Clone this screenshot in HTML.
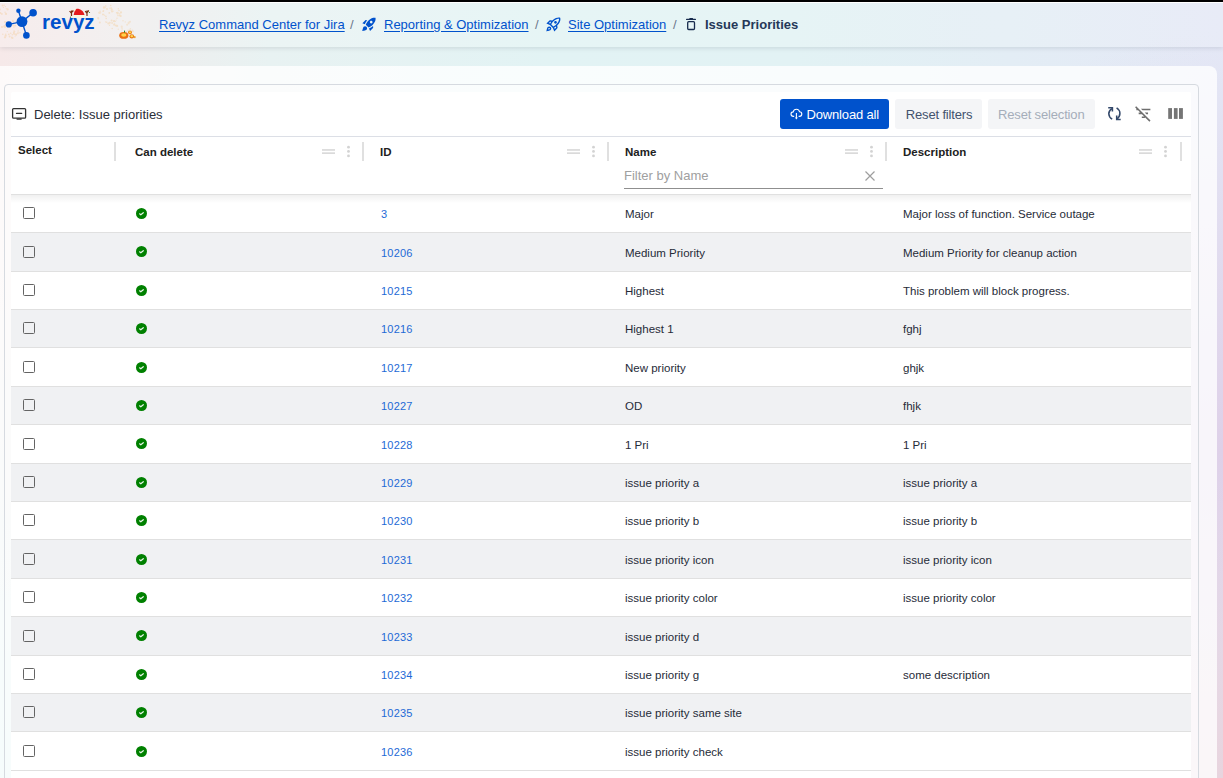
<!DOCTYPE html><html><head><meta charset="utf-8"><title>Issue Priorities</title><style>*{box-sizing:border-box;margin:0;padding:0}
html,body{width:1223px;height:778px;overflow:hidden}
body{position:relative;font-family:"Liberation Sans",sans-serif;color:#172b4d;background:radial-gradient(ellipse 420px 300px at 100% 100%, rgba(232,212,222,1) 0%, rgba(232,212,222,0) 100%),radial-gradient(ellipse 380px 420px at 100% 58%, rgba(222,208,232,1) 0%, rgba(222,208,232,0) 100%),radial-gradient(ellipse 500px 520px at 0% 100%, rgba(212,242,242,1) 0%, rgba(212,242,242,0) 100%),linear-gradient(90deg,#f6e9e9 0%,#f0eded 10%,#e8f2f2 22%,#e2f3f4 45%,#e2f2f4 65%,#e4e8f6 100%);}
.abs{position:absolute}
.topbar{position:absolute;left:0;top:0;width:1223px;height:2px;background:#000}
.hdr{position:absolute;left:0;top:2px;width:1223px;height:45px;border-top:1px solid #fff;background:rgba(255,255,255,.16);box-shadow:0 1px 5px rgba(0,20,40,.12)}
.crumb{position:absolute;top:17px;font-size:13px;line-height:15px;color:#0052cc;text-decoration:underline;text-underline-offset:2px;white-space:nowrap}
.sep{position:absolute;top:17px;font-size:13px;line-height:15px;color:#6b778c}
.cur{position:absolute;top:17px;font-size:13px;line-height:15px;font-weight:bold;color:#253858;white-space:nowrap}
.outer{position:absolute;left:-10px;top:66px;width:1227px;height:800px;border-radius:8px;background:rgba(255,255,255,.78)}
.inner{position:absolute;left:4px;top:84px;width:1195px;height:800px;border:1px solid #d6dae0;border-radius:4px;background:rgba(255,255,255,.2)}
.white{position:absolute;left:11px;top:92px;width:1180px;height:800px;background:#fff;border-radius:2px}
.title{position:absolute;left:34px;top:107px;font-size:13px;line-height:15px;color:#2a2e38;white-space:nowrap}
.btn{position:absolute;top:99px;height:30px;border-radius:3px;font-size:13px;letter-spacing:-0.16px;line-height:30px;white-space:nowrap}
.tline{position:absolute;left:11px;top:136px;width:1180px;height:1px;background:#dcdfe6}
.hline{position:absolute;left:11px;top:194px;width:1180px;height:1px;background:#e0e0e0}
.th{position:absolute;font-size:11.5px;line-height:13px;font-weight:bold;color:#212121;white-space:nowrap}
.csep{position:absolute;top:142px;width:2px;height:19px;background:#e0e0e0}
.drag{position:absolute;top:149px;width:13px;height:4.9px;border-top:1.7px solid #dadada;border-bottom:1.7px solid #dadada}
.dots{position:absolute;top:145.3px;width:3px;height:12px}
.rows{position:absolute;left:0;top:0;width:1223px}
.row{position:absolute;left:11px;width:1180px;height:38.4px;border-bottom:1px solid #e0e0e0;background:#fff;box-sizing:border-box}
.row.alt{background:#f0f1f3}
.rows span,.rows svg{position:absolute;white-space:nowrap}
.cb{left:23px;width:12px;height:12px;border:1.5px solid #646464;border-radius:1.5px}
.ok{left:136px;width:11px;height:11px}
.cid{left:381px;font-size:11px;letter-spacing:0.2px;line-height:13px;color:#1e6ad6}
.cname{left:625px;font-size:11.5px;line-height:13px;color:#262b38}
.cdesc{left:903px;font-size:11.5px;line-height:13px;color:#262b38}
.shadow{position:absolute;left:11px;top:195px;width:1180px;height:8px;background:linear-gradient(rgba(0,0,0,.06),rgba(0,0,0,0));z-index:5}

.bt{position:absolute;top:100px;font-size:13px;letter-spacing:-0.16px;line-height:30px;white-space:nowrap;}
</style></head><body><div class="topbar"></div>
<div class="hdr">
 <svg class="abs" style="left:0;top:-3px" width="150" height="47" viewBox="0 0 150 47"><g fill="#f3c078" opacity="0.3"><circle cx="8.8" cy="34.3" r="0.9"/><circle cx="17.9" cy="33.4" r="0.8"/><circle cx="18.0" cy="32.7" r="0.6"/><circle cx="7.3" cy="31.6" r="0.6"/><circle cx="2.8" cy="34.2" r="0.7"/><circle cx="12.4" cy="38.0" r="1.1"/><circle cx="5.0" cy="26.9" r="1.1"/><circle cx="19.9" cy="32.7" r="0.7"/><circle cx="13.8" cy="33.6" r="0.8"/><circle cx="13.1" cy="25.3" r="0.9"/><circle cx="6.8" cy="24.9" r="0.9"/><circle cx="14.6" cy="31.5" r="0.7"/><circle cx="8.1" cy="23.7" r="0.8"/><circle cx="4.9" cy="26.4" r="0.7"/><circle cx="13.4" cy="21.8" r="0.7"/><circle cx="4.2" cy="26.6" r="1.0"/><circle cx="10.2" cy="24.1" r="1.1"/><circle cx="16.1" cy="34.7" r="1.0"/><circle cx="15.2" cy="36.0" r="0.6"/><circle cx="6.6" cy="22.3" r="0.9"/><circle cx="15.4" cy="25.6" r="0.9"/><circle cx="4.5" cy="25.6" r="0.8"/><circle cx="16.2" cy="21.8" r="0.8"/><circle cx="9.0" cy="26.6" r="1.0"/><circle cx="5.0" cy="22.0" r="1.0"/><circle cx="9.6" cy="36.5" r="0.9"/><circle cx="18.1" cy="31.0" r="0.7"/><circle cx="13.9" cy="32.6" r="1.0"/><circle cx="14.9" cy="34.1" r="0.8"/><circle cx="13.9" cy="27.0" r="0.8"/><circle cx="2.0" cy="27.1" r="1.0"/><circle cx="14.9" cy="25.5" r="0.8"/><circle cx="5.0" cy="37.3" r="1.1"/><circle cx="14.0" cy="34.1" r="0.7"/><circle cx="11.8" cy="37.3" r="0.9"/><circle cx="10.7" cy="33.2" r="0.8"/><circle cx="5.7" cy="35.7" r="1.1"/><circle cx="8.3" cy="23.0" r="0.9"/><circle cx="9.3" cy="26.6" r="1.0"/><circle cx="12.8" cy="20.7" r="1.0"/><circle cx="5.7" cy="34.2" r="0.7"/><circle cx="8.4" cy="27.0" r="0.6"/><circle cx="12.3" cy="34.8" r="0.8"/><circle cx="14.0" cy="31.0" r="0.7"/><circle cx="16.3" cy="33.9" r="0.6"/></g><g fill="#f3c078" opacity="0.3"><circle cx="5.4" cy="6.6" r="0.7"/><circle cx="1.9" cy="13.9" r="0.8"/><circle cx="6.0" cy="13.9" r="1.1"/><circle cx="-2.3" cy="10.9" r="0.6"/><circle cx="5.1" cy="12.3" r="0.7"/><circle cx="3.4" cy="7.4" r="0.6"/><circle cx="6.3" cy="8.6" r="0.7"/><circle cx="-0.0" cy="9.4" r="0.9"/><circle cx="7.6" cy="9.2" r="0.9"/><circle cx="1.7" cy="13.9" r="0.7"/><circle cx="2.6" cy="5.5" r="1.0"/><circle cx="0.4" cy="12.9" r="1.0"/><circle cx="7.6" cy="9.5" r="1.0"/><circle cx="4.2" cy="5.2" r="0.7"/><circle cx="-1.9" cy="9.6" r="0.6"/></g><g fill="#f3c078" opacity="0.3"><circle cx="117.0" cy="18.2" r="0.7"/><circle cx="105.8" cy="6.0" r="0.8"/><circle cx="121.0" cy="12.4" r="1.1"/><circle cx="105.7" cy="21.9" r="0.7"/><circle cx="112.1" cy="23.0" r="0.9"/><circle cx="119.0" cy="10.5" r="0.8"/><circle cx="103.8" cy="8.1" r="0.6"/><circle cx="103.9" cy="7.3" r="1.0"/><circle cx="110.0" cy="8.3" r="0.7"/><circle cx="111.8" cy="9.6" r="1.0"/><circle cx="118.0" cy="15.6" r="0.8"/><circle cx="119.8" cy="13.6" r="0.7"/><circle cx="114.1" cy="21.2" r="1.1"/><circle cx="112.0" cy="11.6" r="1.0"/><circle cx="119.9" cy="15.8" r="0.8"/><circle cx="104.7" cy="15.3" r="0.6"/><circle cx="119.8" cy="15.2" r="0.9"/><circle cx="117.7" cy="13.6" r="1.0"/><circle cx="113.0" cy="11.3" r="0.7"/><circle cx="108.2" cy="23.5" r="0.9"/><circle cx="109.5" cy="25.3" r="0.7"/><circle cx="116.6" cy="12.8" r="0.8"/><circle cx="100.1" cy="11.3" r="0.8"/><circle cx="117.7" cy="12.6" r="0.9"/><circle cx="105.9" cy="16.4" r="0.8"/><circle cx="111.6" cy="20.5" r="1.0"/><circle cx="114.1" cy="24.7" r="1.0"/><circle cx="102.9" cy="14.4" r="0.9"/><circle cx="99.9" cy="13.3" r="0.7"/><circle cx="103.7" cy="14.5" r="0.7"/><circle cx="111.2" cy="8.1" r="0.9"/><circle cx="110.7" cy="5.5" r="0.8"/><circle cx="103.2" cy="11.2" r="0.9"/><circle cx="107.0" cy="9.0" r="0.9"/><circle cx="98.4" cy="18.6" r="0.9"/><circle cx="118.3" cy="8.8" r="0.7"/><circle cx="99.1" cy="12.7" r="1.0"/><circle cx="113.6" cy="21.2" r="0.8"/><circle cx="116.1" cy="20.0" r="0.6"/><circle cx="104.8" cy="7.6" r="1.0"/><circle cx="115.8" cy="25.5" r="0.9"/><circle cx="117.1" cy="25.9" r="1.1"/><circle cx="112.2" cy="28.5" r="0.8"/><circle cx="98.1" cy="18.0" r="1.0"/><circle cx="114.4" cy="24.1" r="0.9"/><circle cx="106.7" cy="22.3" r="0.8"/><circle cx="109.3" cy="12.9" r="0.9"/><circle cx="106.2" cy="18.5" r="0.8"/><circle cx="103.6" cy="10.7" r="0.6"/><circle cx="120.7" cy="16.0" r="1.1"/><circle cx="115.5" cy="21.3" r="0.6"/><circle cx="111.3" cy="10.1" r="0.7"/><circle cx="99.8" cy="22.4" r="1.0"/><circle cx="109.7" cy="22.8" r="1.1"/><circle cx="100.7" cy="12.6" r="0.6"/></g><g fill="#f3c078" opacity="0.25"><circle cx="132.3" cy="30.4" r="0.8"/><circle cx="133.0" cy="31.4" r="0.9"/><circle cx="127.1" cy="24.8" r="1.0"/><circle cx="132.8" cy="31.0" r="0.8"/><circle cx="122.7" cy="33.2" r="1.1"/><circle cx="125.6" cy="31.7" r="0.9"/><circle cx="126.3" cy="31.6" r="0.7"/><circle cx="130.0" cy="29.3" r="0.8"/><circle cx="123.6" cy="34.7" r="0.7"/><circle cx="121.9" cy="28.0" r="0.8"/><circle cx="130.5" cy="28.5" r="0.6"/><circle cx="125.3" cy="21.9" r="0.7"/><circle cx="118.3" cy="29.2" r="0.7"/><circle cx="128.3" cy="22.9" r="0.8"/><circle cx="128.7" cy="23.4" r="0.9"/><circle cx="123.0" cy="20.7" r="0.8"/><circle cx="129.4" cy="22.0" r="0.9"/><circle cx="121.8" cy="30.9" r="0.6"/><circle cx="128.2" cy="30.4" r="1.0"/><circle cx="125.9" cy="32.0" r="0.6"/><circle cx="130.1" cy="21.7" r="0.9"/><circle cx="125.1" cy="32.4" r="0.7"/><circle cx="122.2" cy="29.0" r="0.8"/><circle cx="125.3" cy="35.8" r="1.1"/><circle cx="121.7" cy="26.7" r="1.1"/></g><g stroke="#0052cc" stroke-width="1.4" fill="none"><line x1="22" y1="21.6" x2="18.4" y2="10.8"/><line x1="22" y1="21.6" x2="33.1" y2="12.8"/><line x1="22" y1="21.6" x2="8.8" y2="24.4"/><line x1="22" y1="21.6" x2="26.4" y2="35.4"/></g><g fill="#0052cc"><circle cx="22" cy="21.6" r="5.4"/><circle cx="18.4" cy="10.8" r="2.2"/><circle cx="33.1" cy="12.8" r="3.8"/><circle cx="8.8" cy="24.4" r="3.1"/><circle cx="26.4" cy="35.4" r="3.3"/></g><text x="42" y="28.7" font-family="Liberation Sans" font-weight="bold" font-size="20.6" fill="#0052cc">revyz</text><path d="M73.6 15.8C74 12.5 74.8 9.6 76.3 8.9 79.8 8.4 83.6 10.8 84.6 15.2Z" fill="#e51a1c"/><circle cx="74.6" cy="10" r=".9" fill="#fff7d0"/><rect x="72.6" y="15" width="12.6" height="2.4" rx="1.2" fill="#fbf6dc"/><g stroke="#7a2e0e" stroke-width="1.2" fill="none"><path d="M71.5 16V10.5M71.5 13.5L69.6 11M71.5 12.5L73.4 10.5"/><path d="M87 16V10.5M87 13.5L85.2 11M87 12.5L88.8 10.5"/></g><circle cx="70.5" cy="17.2" r=".6" fill="#2a8a2a"/><circle cx="89.5" cy="12.5" r=".6" fill="#2a8a2a"/><ellipse cx="123.8" cy="35.4" rx="4.6" ry="3.4" fill="#ea6f12"/><ellipse cx="123.8" cy="35" rx="2.6" ry="1.8" fill="#ffd34a"/><rect x="124" y="30.6" width="1" height="2" fill="#2d8a2d"/><ellipse cx="130" cy="32.4" rx="2" ry="1.8" fill="#ee8318"/><ellipse cx="130" cy="32.2" rx="1.1" ry="1" fill="#ffd84f"/><ellipse cx="131.8" cy="36.4" rx="2.4" ry="2.1" fill="#ea7a16"/><ellipse cx="131.8" cy="36.2" rx="1.3" ry="1.1" fill="#ffd84f"/><ellipse cx="134.8" cy="37.2" rx=".9" ry="1.1" fill="#e9a030"/></svg>
</div>
<a class="crumb" style="left:159px">Revyz Command Center for Jira</a>
<span class="sep" style="left:350px">/</span>
<svg class="abs" style="left:360.7px;top:16px" width="16.32" height="16.32" viewBox="0 0 24 24"><path fill="#0052cc" d="M9.19,6.35c-2.04,2.29-3.44,5.58-3.57,5.89L2,10.69l4.05-4.05c0.47-0.47,1.15-0.68,1.81-0.55L9.19,6.35L9.19,6.35z M11.17,17c0,0,3.74-1.55,5.890-3.7c5.4-5.4,4.5-9.62,4.21-10.57c-0.95-0.3-5.170-1.19-10.57,4.21C8.55,9.09,7,12.83,7,12.83L11.17,17z M17.65,14.81c-2.29,2.04-5.58,3.44-5.89,3.57L13.31,22l4.05-4.05c0.47-0.47,0.68-1.15,0.55-1.81L17.65,14.81L17.65,14.81z M9,18c0,0.83-0.34,1.58-0.88,2.12C6.94,21.3,2,22,2,22s0.7-4.94,1.880-6.12C4.42,15.34,5.17,15,6,15C7.66,15,9,16.34,9,18z M13,9c0-1.1,0.9-2,2-2s2,0.9,2,2s-0.9,2-2,2S13,10.1,13,9z"/></svg>
<a class="crumb" style="left:384px">Reporting &amp; Optimization</a>
<span class="sep" style="left:535px">/</span>
<svg class="abs" style="left:544.6px;top:15.6px" width="16.8" height="16.8" viewBox="0 0 24 24"><path fill="#0052cc" d="M6,15c-0.83,0-1.58,0.34-2.12,0.88C2.7,17.06,2,22,2,22s4.94-0.7,6.12-1.88C8.66,19.58,9,18.83,9,18C9,16.34,7.66,15,6,15z M6.71,18.71c-0.28,0.28-2.170,0.76-2.17,0.76s0.47-1.88,0.76-2.17C5.47,17.11,5.72,17,6,17c0.55,0,1,0.45,1,1C7,18.28,6.89,18.53,6.71,18.71z M17.42,13.65L17.42,13.65c6.36-6.36,4.24-11.31,4.24-11.31s-4.95-2.12-11.31,4.24l-2.49-0.5C7.21,5.950,6.53,6.16,6.05,6.63L2,10.69l5,2.14L11.17,17l2.14,5l4.05-4.05c0.47-0.47,0.68-1.15,0.55-1.81L17.42,13.65z M7.41,10.83L5.5,10.01l1.97-1.97l1.44,0.29C8.34,9.16,7.83,10.03,7.41,10.83z M13.99,18.5l-0.82-1.91c0.8-0.42,1.67-0.93,2.49-1.5l0.29,1.44L13.99,18.5z M16,12.24c-1.32,1.32-3.38,2.4-4.04,2.73l-2.93-2.93c0.32-0.65,1.4-2.71,2.73-4.04c4.68-4.68,8.23-3.99,8.23-3.99S20.68,7.56,16,12.24z M15,11c1.1,0,2-0.9,2-2s-0.9-2-2-2s-2,0.9-2,2S13.9,11,15,11z"/></svg>
<a class="crumb" style="left:568px">Site Optimization</a>
<span class="sep" style="left:673px">/</span>
<svg class="abs" style="left:685px;top:17px" width="12" height="14" viewBox="0 0 12 14"><rect x="1" y="1.8" width="10" height="1.2" rx=".6" fill="#172b4d"/><rect x="4.3" y="1" width="3.7" height="1.4" rx=".5" fill="#172b4d"/><rect x="2.7" y="4.7" width="6.8" height="7.8" rx="1" fill="none" stroke="#172b4d" stroke-width="1.3"/></svg>
<span class="cur" style="left:705px">Issue Priorities</span>

<div class="outer"></div>
<div class="inner"></div>
<div class="white">
</div>
<div style="position:absolute;left:0;top:0;width:1223px;height:778px">
<svg class="abs" style="left:11px;top:107px" width="16" height="14" viewBox="0 0 16 14"><rect x="1.6" y="1.6" width="13" height="9.6" rx="1" fill="none" stroke="#333" stroke-width="1.3"/><line x1="5.5" y1="6.4" x2="10.7" y2="6.4" stroke="#333" stroke-width="1.2" stroke-linecap="round"/><rect x="5.4" y="11.4" width="5.4" height="1.3" rx=".6" fill="#333"/></svg>
<span class="title">Delete: Issue priorities</span>
<div class="btn" style="left:780px;width:109px;background:#0052cc"></div><span class="bt" style="left:806.5px;color:#fff">Download all</span>
<svg class="abs" style="left:786px;top:104px" width="22" height="20" viewBox="0 0 22 20"><path d="M8.2 12.4H7.4C5.9 12.4 5 11.3 5 10.1 5 8.9 5.9 7.9 7.2 7.9 7.6 6.2 8.9 5.3 10.4 5.3 12 5.3 13.2 6.3 13.6 7.8 14.9 7.9 15.8 8.9 15.8 10.1 15.8 11.4 14.9 12.4 13.4 12.4H12.6" fill="none" stroke="#fff" stroke-width="1.1"/><path d="M10.4 9V14" stroke="#fff" stroke-width="1.1"/><path d="M8.9 13.4H11.9L10.4 15.4Z" fill="#fff"/></svg>
<div class="btn" style="left:895px;width:87px;background:#f4f5f7"></div><span class="bt" style="left:905.8px;color:#42526e">Reset filters</span>
<div class="btn" style="left:988px;width:107px;background:#f4f5f7"></div><span class="bt" style="left:998px;color:#a5adba">Reset selection</span>
<svg class="abs" style="left:1104px;top:104px" width="20" height="20" viewBox="0 0 20 20"><g fill="none" stroke="#33486a" stroke-width="1.55"><path d="M7.9 4.6C5.7 6 4.7 7.9 4.8 9.8 4.9 12 6.1 14 8.2 15.2"/><path d="M4.2 3.7H8.4V7.5"/><path d="M12.6 3.9C14.8 5.3 15.9 7.3 15.9 9.3 15.9 11.5 14.9 13.6 13 15"/><path d="M12.7 11.6V15.4H16.7"/></g></svg>
<svg class="abs" style="left:1134.3px;top:104.3px" width="18.72" height="18.72" viewBox="0 0 24 24"><path fill="#6e6e6e" d="M10.83 8H21V6H8.83l2 2zm5 5H18v-2h-4.17l2 2zM14 16.83V18h-4v-2h3.17l-3-3H6v-2h2.17l-3-3H3V6h.17L1.39 4.22 2.8 2.81l18.38 18.38-1.41 1.41L14 16.83z"/></svg>
<svg class="abs" style="left:1164px;top:104px" width="20" height="20" viewBox="0 0 20 20"><g fill="#757575"><rect x="4.2" y="4.1" width="3.8" height="10.8"/><rect x="9.9" y="4.1" width="3.7" height="10.8"/><rect x="15" y="4.1" width="3.9" height="10.8"/></g></svg>
<div class="tline"></div>
<span class="th" style="left:18px;top:144px">Select</span>
<div class="csep" style="left:114px"></div>
<span class="th" style="left:135px;top:146px">Can delete</span>
<svg class="abs" style="left:322px;top:145px" width="13" height="12" viewBox="0 0 13 12"><rect x="0" y="4.1" width="13" height="1.7" fill="#dadada"/><rect x="0" y="7.3" width="13" height="1.7" fill="#dadada"/></svg>
<svg class="abs" style="left:347px;top:145px" width="3" height="13" viewBox="0 0 3 13"><circle cx="1.5" cy="2.2" r="1.4" fill="#d3d3d3"/><circle cx="1.5" cy="6.4" r="1.4" fill="#d3d3d3"/><circle cx="1.5" cy="10.9" r="1.4" fill="#d3d3d3"/></svg>
<div class="csep" style="left:362px"></div>
<span class="th" style="left:380px;top:146px">ID</span>
<svg class="abs" style="left:567px;top:145px" width="13" height="12" viewBox="0 0 13 12"><rect x="0" y="4.1" width="13" height="1.7" fill="#dadada"/><rect x="0" y="7.3" width="13" height="1.7" fill="#dadada"/></svg>
<svg class="abs" style="left:592px;top:145px" width="3" height="13" viewBox="0 0 3 13"><circle cx="1.5" cy="2.2" r="1.4" fill="#d3d3d3"/><circle cx="1.5" cy="6.4" r="1.4" fill="#d3d3d3"/><circle cx="1.5" cy="10.9" r="1.4" fill="#d3d3d3"/></svg>
<div class="csep" style="left:607px"></div>
<span class="th" style="left:625px;top:146px">Name</span>
<span class="abs ph" style="left:624px;top:168px;font-size:13px;line-height:15px;color:#a0a0a0">Filter by Name</span>
<svg class="abs" style="left:864px;top:170px" width="12" height="12" viewBox="0 0 12 12"><path d="M1.5 1.5l9 9M10.5 1.5l-9 9" stroke="#9e9e9e" stroke-width="1.2"/></svg>
<div class="abs" style="left:624px;top:188px;width:259px;height:1px;background:#8f8f8f"></div>
<svg class="abs" style="left:845px;top:145px" width="13" height="12" viewBox="0 0 13 12"><rect x="0" y="4.1" width="13" height="1.7" fill="#dadada"/><rect x="0" y="7.3" width="13" height="1.7" fill="#dadada"/></svg>
<svg class="abs" style="left:870px;top:145px" width="3" height="13" viewBox="0 0 3 13"><circle cx="1.5" cy="2.2" r="1.4" fill="#d3d3d3"/><circle cx="1.5" cy="6.4" r="1.4" fill="#d3d3d3"/><circle cx="1.5" cy="10.9" r="1.4" fill="#d3d3d3"/></svg>
<div class="csep" style="left:885px"></div>
<span class="th" style="left:903px;top:146px">Description</span>
<svg class="abs" style="left:1139px;top:145px" width="13" height="12" viewBox="0 0 13 12"><rect x="0" y="4.1" width="13" height="1.7" fill="#dadada"/><rect x="0" y="7.3" width="13" height="1.7" fill="#dadada"/></svg>
<svg class="abs" style="left:1164px;top:145px" width="3" height="13" viewBox="0 0 3 13"><circle cx="1.5" cy="2.2" r="1.4" fill="#d3d3d3"/><circle cx="1.5" cy="6.4" r="1.4" fill="#d3d3d3"/><circle cx="1.5" cy="10.9" r="1.4" fill="#d3d3d3"/></svg>
<div class="csep" style="left:1180px"></div>
<div class="hline"></div>
<div class="shadow"></div>
<div class="rows"><div class="row" style="top:194.85px"></div><div class="row alt" style="top:233.25px"></div><div class="row" style="top:271.65px"></div><div class="row alt" style="top:310.05px"></div><div class="row" style="top:348.45px"></div><div class="row alt" style="top:386.85px"></div><div class="row" style="top:425.25px"></div><div class="row alt" style="top:463.65px"></div><div class="row" style="top:502.05px"></div><div class="row alt" style="top:540.45px"></div><div class="row" style="top:578.85px"></div><div class="row alt" style="top:617.25px"></div><div class="row" style="top:655.65px"></div><div class="row alt" style="top:694.05px"></div><div class="row" style="top:732.45px"></div><span class="cb" style="top:207.15px"></span><svg class="ok" style="top:208.05px" width="11" height="11" viewBox="0 0 11 11"><circle cx="5.5" cy="5.5" r="5.5" fill="#008000"/><path d="M3.6 5.8 L4.8 6.8 L7.3 4.7" stroke="#eaf5ea" stroke-width="1.15" fill="none" stroke-linecap="round" stroke-linejoin="round"/></svg><span class="cid" style="top:208.10px">3</span><span class="cname" style="top:208.10px">Major</span><span class="cdesc" style="top:208.10px">Major loss of function. Service outage</span><span class="cb" style="top:245.55px"></span><svg class="ok" style="top:246.45px" width="11" height="11" viewBox="0 0 11 11"><circle cx="5.5" cy="5.5" r="5.5" fill="#008000"/><path d="M3.6 5.8 L4.8 6.8 L7.3 4.7" stroke="#eaf5ea" stroke-width="1.15" fill="none" stroke-linecap="round" stroke-linejoin="round"/></svg><span class="cid" style="top:246.50px">10206</span><span class="cname" style="top:246.50px">Medium Priority</span><span class="cdesc" style="top:246.50px">Medium Priority for cleanup action</span><span class="cb" style="top:283.95px"></span><svg class="ok" style="top:284.85px" width="11" height="11" viewBox="0 0 11 11"><circle cx="5.5" cy="5.5" r="5.5" fill="#008000"/><path d="M3.6 5.8 L4.8 6.8 L7.3 4.7" stroke="#eaf5ea" stroke-width="1.15" fill="none" stroke-linecap="round" stroke-linejoin="round"/></svg><span class="cid" style="top:284.90px">10215</span><span class="cname" style="top:284.90px">Highest</span><span class="cdesc" style="top:284.90px">This problem will block progress.</span><span class="cb" style="top:322.35px"></span><svg class="ok" style="top:323.25px" width="11" height="11" viewBox="0 0 11 11"><circle cx="5.5" cy="5.5" r="5.5" fill="#008000"/><path d="M3.6 5.8 L4.8 6.8 L7.3 4.7" stroke="#eaf5ea" stroke-width="1.15" fill="none" stroke-linecap="round" stroke-linejoin="round"/></svg><span class="cid" style="top:323.30px">10216</span><span class="cname" style="top:323.30px">Highest 1</span><span class="cdesc" style="top:323.30px">fghj</span><span class="cb" style="top:360.75px"></span><svg class="ok" style="top:361.65px" width="11" height="11" viewBox="0 0 11 11"><circle cx="5.5" cy="5.5" r="5.5" fill="#008000"/><path d="M3.6 5.8 L4.8 6.8 L7.3 4.7" stroke="#eaf5ea" stroke-width="1.15" fill="none" stroke-linecap="round" stroke-linejoin="round"/></svg><span class="cid" style="top:361.70px">10217</span><span class="cname" style="top:361.70px">New priority</span><span class="cdesc" style="top:361.70px">ghjk</span><span class="cb" style="top:399.15px"></span><svg class="ok" style="top:400.05px" width="11" height="11" viewBox="0 0 11 11"><circle cx="5.5" cy="5.5" r="5.5" fill="#008000"/><path d="M3.6 5.8 L4.8 6.8 L7.3 4.7" stroke="#eaf5ea" stroke-width="1.15" fill="none" stroke-linecap="round" stroke-linejoin="round"/></svg><span class="cid" style="top:400.10px">10227</span><span class="cname" style="top:400.10px">OD</span><span class="cdesc" style="top:400.10px">fhjk</span><span class="cb" style="top:437.55px"></span><svg class="ok" style="top:438.45px" width="11" height="11" viewBox="0 0 11 11"><circle cx="5.5" cy="5.5" r="5.5" fill="#008000"/><path d="M3.6 5.8 L4.8 6.8 L7.3 4.7" stroke="#eaf5ea" stroke-width="1.15" fill="none" stroke-linecap="round" stroke-linejoin="round"/></svg><span class="cid" style="top:438.50px">10228</span><span class="cname" style="top:438.50px">1 Pri</span><span class="cdesc" style="top:438.50px">1 Pri</span><span class="cb" style="top:475.95px"></span><svg class="ok" style="top:476.85px" width="11" height="11" viewBox="0 0 11 11"><circle cx="5.5" cy="5.5" r="5.5" fill="#008000"/><path d="M3.6 5.8 L4.8 6.8 L7.3 4.7" stroke="#eaf5ea" stroke-width="1.15" fill="none" stroke-linecap="round" stroke-linejoin="round"/></svg><span class="cid" style="top:476.90px">10229</span><span class="cname" style="top:476.90px">issue priority a</span><span class="cdesc" style="top:476.90px">issue priority a</span><span class="cb" style="top:514.35px"></span><svg class="ok" style="top:515.25px" width="11" height="11" viewBox="0 0 11 11"><circle cx="5.5" cy="5.5" r="5.5" fill="#008000"/><path d="M3.6 5.8 L4.8 6.8 L7.3 4.7" stroke="#eaf5ea" stroke-width="1.15" fill="none" stroke-linecap="round" stroke-linejoin="round"/></svg><span class="cid" style="top:515.30px">10230</span><span class="cname" style="top:515.30px">issue priority b</span><span class="cdesc" style="top:515.30px">issue priority b</span><span class="cb" style="top:552.75px"></span><svg class="ok" style="top:553.65px" width="11" height="11" viewBox="0 0 11 11"><circle cx="5.5" cy="5.5" r="5.5" fill="#008000"/><path d="M3.6 5.8 L4.8 6.8 L7.3 4.7" stroke="#eaf5ea" stroke-width="1.15" fill="none" stroke-linecap="round" stroke-linejoin="round"/></svg><span class="cid" style="top:553.70px">10231</span><span class="cname" style="top:553.70px">issue priority icon</span><span class="cdesc" style="top:553.70px">issue priority icon</span><span class="cb" style="top:591.15px"></span><svg class="ok" style="top:592.05px" width="11" height="11" viewBox="0 0 11 11"><circle cx="5.5" cy="5.5" r="5.5" fill="#008000"/><path d="M3.6 5.8 L4.8 6.8 L7.3 4.7" stroke="#eaf5ea" stroke-width="1.15" fill="none" stroke-linecap="round" stroke-linejoin="round"/></svg><span class="cid" style="top:592.10px">10232</span><span class="cname" style="top:592.10px">issue priority color</span><span class="cdesc" style="top:592.10px">issue priority color</span><span class="cb" style="top:629.55px"></span><svg class="ok" style="top:630.45px" width="11" height="11" viewBox="0 0 11 11"><circle cx="5.5" cy="5.5" r="5.5" fill="#008000"/><path d="M3.6 5.8 L4.8 6.8 L7.3 4.7" stroke="#eaf5ea" stroke-width="1.15" fill="none" stroke-linecap="round" stroke-linejoin="round"/></svg><span class="cid" style="top:630.50px">10233</span><span class="cname" style="top:630.50px">issue priority d</span><span class="cb" style="top:667.95px"></span><svg class="ok" style="top:668.85px" width="11" height="11" viewBox="0 0 11 11"><circle cx="5.5" cy="5.5" r="5.5" fill="#008000"/><path d="M3.6 5.8 L4.8 6.8 L7.3 4.7" stroke="#eaf5ea" stroke-width="1.15" fill="none" stroke-linecap="round" stroke-linejoin="round"/></svg><span class="cid" style="top:668.90px">10234</span><span class="cname" style="top:668.90px">issue priority g</span><span class="cdesc" style="top:668.90px">some description</span><span class="cb" style="top:706.35px"></span><svg class="ok" style="top:707.25px" width="11" height="11" viewBox="0 0 11 11"><circle cx="5.5" cy="5.5" r="5.5" fill="#008000"/><path d="M3.6 5.8 L4.8 6.8 L7.3 4.7" stroke="#eaf5ea" stroke-width="1.15" fill="none" stroke-linecap="round" stroke-linejoin="round"/></svg><span class="cid" style="top:707.30px">10235</span><span class="cname" style="top:707.30px">issue priority same site</span><span class="cb" style="top:744.75px"></span><svg class="ok" style="top:745.65px" width="11" height="11" viewBox="0 0 11 11"><circle cx="5.5" cy="5.5" r="5.5" fill="#008000"/><path d="M3.6 5.8 L4.8 6.8 L7.3 4.7" stroke="#eaf5ea" stroke-width="1.15" fill="none" stroke-linecap="round" stroke-linejoin="round"/></svg><span class="cid" style="top:745.70px">10236</span><span class="cname" style="top:745.70px">issue priority check</span></div></div></body></html>
